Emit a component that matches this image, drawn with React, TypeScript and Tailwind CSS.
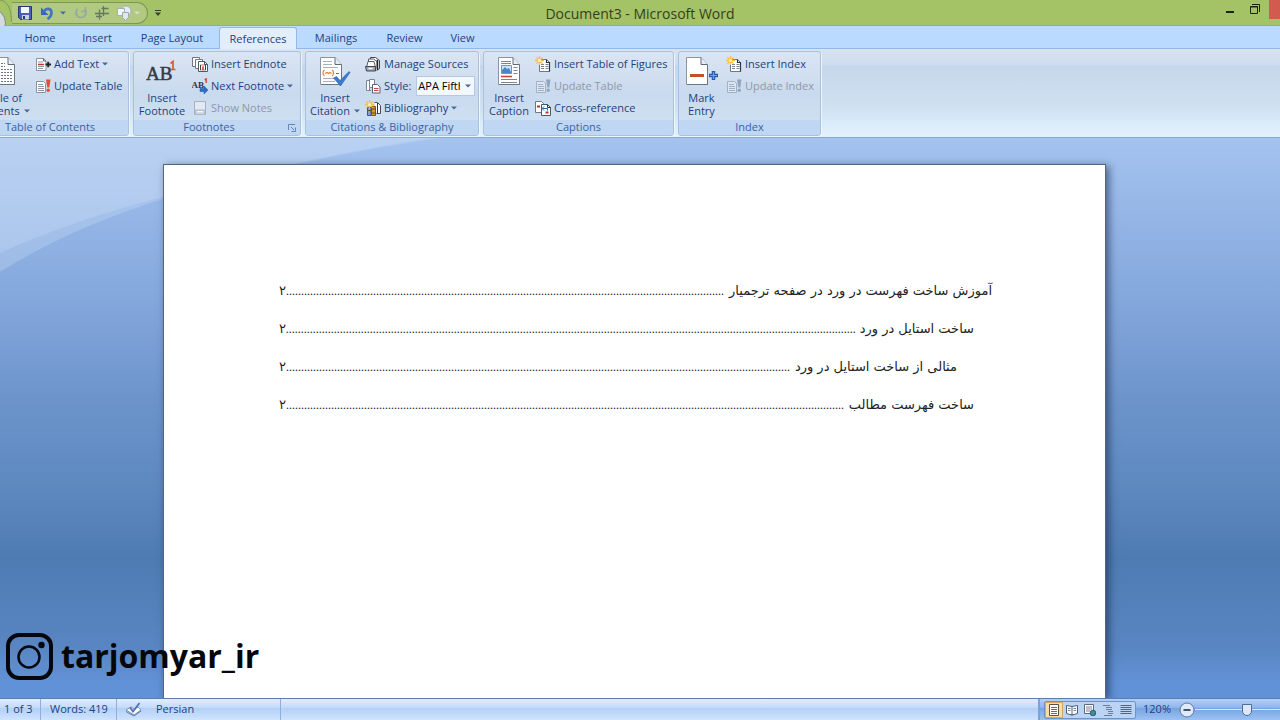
import React from "react";

/* ---------- icons ---------- */

type P = { children: React.ReactNode };

const Small = ({ children }: P) => (
  <svg className="size-4 shrink-0" viewBox="0 0 16 16" fill="none" aria-hidden="true">
    {children}
  </svg>
);

const Big = ({ children }: P) => (
  <svg className="size-8 shrink-0" viewBox="0 0 32 32" fill="none" aria-hidden="true">
    {children}
  </svg>
);

const Caret = () => (
  <svg className="h-1 w-1.5 shrink-0" viewBox="0 0 6 4" aria-hidden="true">
    <path d="M0 .5h6L3 3.5z" fill="#4c689b" />
  </svg>
);

const Star = () => (
  <>
    <path
      d="M4.500 0v9M0 4.500h9M1.400 1.400l6.200 6.200M7.600 1.400L1.400 7.600"
      stroke="#f2c040"
      strokeWidth="1.300"
    />
    <circle cx="4.500" cy="4.500" r="1.500" fill="#fff3b8" />
  </>
);

const AddTextIcon = () => (
  <Small>
    <path d="M1.500 2.500h7l2.500 2.500v9.500h-9.500z" fill="#fff" stroke="#8793a5" />
    <path d="M8.500 2.500v2.500h2.500" stroke="#5b6778" />
    <path d="M3 6h5M3 10.500h6M3 12.500h5" stroke="#8b98b0" />
    <path d="M3 8.500h6" stroke="#c33a2c" strokeWidth="1.500" />
    <path d="M10.500 8.500h5.500M13.200 5.800v5.500" stroke="#222" strokeWidth="1.900" />
  </Small>
);

const UpdateTableIcon = ({ off = false }: { off?: boolean }) => (
  <Small>
    <path d="M1.500 3.500h7l2 2v9h-9z" fill={off ? "#dfe6f0" : "#fff"} stroke={off ? "#a3afc2" : "#8793a5"} />
    <path d="M3 6.500h5M3 8.500h6M3 10.500h6M3 12.500h6" stroke={off ? "#9fb0c9" : "#8b98b0"} />
    <path d="M11 1.500h4.500l-1.200 8h-2z" fill={off ? "#93a4bf" : "#e2502b"} />
    <circle cx="13.200" cy="12.300" r="1.700" fill={off ? "#93a4bf" : "#e2502b"} />
  </Small>
);

const EndnoteIcon = () => (
  <Small>
    <path d="M.5 1.500h7v9h-7z" fill="#fff" stroke="#6e7785" />
    <path d="M3.500 3.500h7v9h-7z" fill="#fff" stroke="#6e7785" />
    <path d="M6.500 5.500h6l3 3v7h-9z" fill="#fff" stroke="#4f5865" />
    <path d="M12.500 5.500v3h3" stroke="#4f5865" />
    <path d="M9.500 9h-1v5h1M12.500 9h1v5h-1" stroke="#444" />
    <path d="M11 10.500v4M11 8.500v1" stroke="#c0312a" strokeWidth="1.500" />
  </Small>
);

const NextFootnoteIcon = () => (
  <Small>
    <text x="-.5" y="10" fontSize="9" fontWeight="700" fontFamily="Liberation Serif, serif" fill="#333">
      AB
    </text>
    <path d="M12.700 1.800l1.500-1V5" stroke="#d9452b" strokeWidth="1.400" />
    <path d="M8 10.500h4V8l4 4-4 4v-2.500H8z" fill="#2d6fc4" stroke="#1b4f98" strokeWidth=".5" />
  </Small>
);

const ShowNotesIcon = () => (
  <Small>
    <path d="M2.500 1.500h11v13h-11z" fill="#e3e9f2" stroke="#a5b0c0" />
    <path d="M3 9.500h10v5H3z" fill="#b4bfcf" />
    <path d="M4.500 11.500h7M4.500 13h7" stroke="#f3f6fa" />
  </Small>
);

const SourcesIcon = () => (
  <Small>
    <path d="M5.500 5V1.500h5l4 3v8l-3 2" fill="#fff" stroke="#3f4650" />
    <path d="M3.500 6V3h5l3.500 2.500v7" fill="#fff" stroke="#555d69" />
    <path d="M1.500 11.500L3 5.500h6l1.500 6z" fill="#fff" stroke="#555d69" />
    <path d="M.5 10.500h10v4.500H1.500z" fill="#9aa7ba" stroke="#3f4650" />
    <path d="M3.500 12.500h4" stroke="#fff" strokeWidth="1.500" />
    <path d="M12.500 4v10" stroke="#222" strokeWidth="1.500" />
  </Small>
);

const StyleIcon = () => (
  <Small>
    <path d="M1.500 2.500h3v10h-3z" fill="#fff" stroke="#7d8693" />
    <path d="M4.500 1.500h5v8h-5z" fill="#fff" stroke="#7d8693" />
    <path d="M3 12.500h3" stroke="#7d8693" />
    <path d="M7.500 6.500h5l2.500 2.500v6H7.500z" fill="#fff" stroke="#59626f" />
    <path d="M9 10.500h4.500M9 12.500h4.500" stroke="#c24a3f" />
  </Small>
);

const BibliographyIcon = () => (
  <Small>
    <path d="M9.500 2.500h3l3 3v8h-4" fill="#fff" stroke="#444b56" />
    <path d="M2.500 7.500h3.500v8H2.500z" fill="#8c9fd0" stroke="#3e5590" />
    <path d="M6.500 6.500h4v9h-4z" fill="#d59a32" stroke="#7e5514" />
    <path d="M2.500 10.500h3.500M6.500 9h4M6.500 13h4" stroke="#5b4a30" />
    <path d="M12.500 3v10" stroke="#333" />
    <Star />
  </Small>
);

const StarTableIcon = () => (
  <Small>
    <path d="M4.500 3.500h7l3 3v9h-10z" fill="#fff" stroke="#6e7785" />
    <path d="M11.500 3.500v3h3v9" stroke="#30363e" strokeWidth="1.200" />
    <path d="M6 8.500h3M6 10.500h3M6 12.500h3M10.500 8.500h3M10.500 10.500h3M10.500 12.500h3" stroke="#76859c" />
    <Star />
  </Small>
);

const CrossRefIcon = () => (
  <Small>
    <path d="M.5 1.500h6l2 2v9h-8z" fill="#fff" stroke="#6e7785" />
    <path d="M6.500 4.500h6l3 3v8h-9z" fill="#fff" stroke="#4c5561" />
    <path d="M12.500 4.500v3h3" stroke="#2e343c" />
    <path d="M2 6.500h3" stroke="#c0312a" strokeWidth="2" />
    <path d="M10.500 12.500h3" stroke="#c0312a" strokeWidth="2" />
    <path d="M12.500 10.500V8.500H7.500M9 6.500l-2 2 2 2" stroke="#2f5fae" />
  </Small>
);

const BigPage = ({ x }: { x: number }) => (
  <g transform={`translate(${x} 0)`}>
    <path d="M.5 1.500h14.500l6.500 7v20H.5z" fill="#fff" stroke="#8a94a2" />
    <path d="M15 1.500v7h6.500" fill="#e6ecf4" stroke="#5e6977" />
    <path d="M21.500 9v19.500H1" stroke="#6b7684" />
  </g>
);

const TocIcon = () => (
  <Big>
    <BigPage x={7} />
    <path d="M9 7.500h10M9 10.500h10M9 13.500h17M9 16.500h17M9 19.500h17M9 22.500h17M9 25.500h17" stroke="#6c7889" strokeDasharray="2 1" />
  </Big>
);

const FootnoteIcon = () => (
  <Big>
    <text x="0" y="24" fontSize="19" fontFamily="Liberation Serif, serif" stroke="#333b47" strokeWidth=".5" fill="#333b47">
      AB
    </text>
    <path d="M24.500 7.500l2.500-2v8M24.500 13.500h5" stroke="#dc5a36" strokeWidth="1.700" />
  </Big>
);

const CitationIcon = () => (
  <Big>
    <BigPage x={1} />
    <path d="M4 5.500h9M4 8.500h9M4 11.500h15M4 22.500h11M4 25.500h12" stroke="#a8b0bb" />
    <path d="M5.500 14c-2 1-2 5 0 6M13 14c2 1 2 5 0 6M6 17.500l2-1 1.500 1 1.500-1 1.500 1" stroke="#d88245" strokeWidth="1.200" />
    <path d="M17 17.500h3" stroke="#5e6977" />
    <path d="M14.500 22l3-1.500 3.500 4L30 15.500l1 1L21.500 30z" fill="#3a7bd0" stroke="#2a5fac" strokeWidth=".6" />
  </Big>
);

const CaptionIcon = () => (
  <Big>
    <BigPage x={5} />
    <path d="M8 5.500h10M8 7.500h10M20.500 11.500h4M20.500 14.500h4M20.500 17.500h4M8 23.500h16M8 26.500h16" stroke="#7c8796" />
    <path d="M8.500 9.500h10v8h-10z" fill="#cfe4f8" stroke="#6b97c9" />
    <path d="M9 17v-3l3-3 2 2 2-1 2.500 5z" fill="#4d86c2" />
    <path d="M8 20.500h11" stroke="#c0413a" strokeWidth="1.500" />
  </Big>
);

const MarkEntryIcon = () => (
  <Big>
    <BigPage x={0} />
    <path d="M4 19.500h14" stroke="#c6501f" strokeWidth="3" />
    <path d="M27.500 15v9M23 19.500h9" stroke="#2a59a5" strokeWidth="3.500" />
    <path d="M27.500 16v7M24 19.500h7" stroke="#6fa0e6" strokeWidth="1.200" />
  </Big>
);

/* ---------- ribbon parts ---------- */

function BigButton({ icon, top, bottom, menu, width }: {
  icon: React.ReactNode; top: string; bottom: string; menu?: boolean; width: string;
}) {
  return (
    <button className={`flex shrink-0 flex-col items-center pt-[3px] leading-[13px] ${width}`}>
      {icon}
      <span className="mt-[3px]">{top}</span>
      <span className="flex items-center gap-1 whitespace-nowrap">
        {bottom}
        {menu && <Caret />}
      </span>
    </button>
  );
}

function SmallButton({ icon, label, menu, disabled }: {
  icon: React.ReactNode; label: string; menu?: boolean; disabled?: boolean;
}) {
  return (
    <button disabled={disabled} className="flex h-[22px] items-center gap-[3px] whitespace-nowrap disabled:text-[#8f98a6]">
      {icon}
      <span>{label}</span>
      {menu && <Caret />}
    </button>
  );
}

function Group({ title, width, launcher, children }: {
  title: string; width: string; launcher?: boolean; children: React.ReactNode;
}) {
  return (
    <section aria-label={title} className={`flex h-[85px] shrink-0 flex-col overflow-hidden rounded-[3px] border border-[#a9c1dd] bg-linear-to-b from-[#dbe5f3] via-[#c9daee] to-[#d2e2f4] shadow-[1px_1px_0_#eef6fd] ${width}`}>
      <div className="flex flex-1 px-1 pt-px">{children}</div>
      <div className="flex h-[15px] shrink-0 items-center bg-[#bfd7f2] text-[#3b62a2]">
        <h2 className="flex-1 text-center">{title}</h2>
        {launcher && (
          <button aria-label="Footnote settings" className="mr-1 ml-1">
            <svg className="size-2" viewBox="0 0 8 8" fill="none">
              <path d="M.5 6V.5H7M3 3l3 3M7.500 3.500v4h-4" stroke="#6583b3" />
            </svg>
          </button>
        )}
      </div>
    </section>
  );
}

const tabs = [
  { name: "Home", cls: "w-[58px]" },
  { name: "Insert", cls: "w-[56px]" },
  { name: "Page Layout", cls: "w-[94px]" },
  { name: "References", cls: "w-[78px]" },
  { name: "Mailings", cls: "w-[78px]" },
  { name: "Review", cls: "w-[59px]" },
  { name: "View", cls: "w-[57px]" },
];

const entries = [
  { text: "آموزش ساخت فهرست در ورد در صفحه ترجمیار", pad: "pr-0", dots: 146 },
  { text: "ساخت استایل در ورد", pad: "pr-[18px]", dots: 190 },
  { text: "مثالی از ساخت استایل در ورد", pad: "pr-[35px]", dots: 168 },
  { text: "ساخت فهرست مطالب", pad: "pr-[18px]", dots: 186 },
];

function TitleBar() {
  return (
    <header className="grid h-[26px] shrink-0 grid-cols-[1fr_auto_1fr] items-center border-b border-[#8fb573] bg-[#a4c266]">
      <div className="flex h-full items-center">
        <svg className="h-[26px] w-3 shrink-0" viewBox="0 0 12 26" fill="none" aria-hidden="true">
          <path d="M0 0c7 1 11.500 8 11.500 22" stroke="#81994f" />
          <circle cx="-9" cy="23" r="14.500" fill="#d3dae2" stroke="#7e8c85" />
        </svg>
        <div className="flex h-[22px] w-[136px] items-center gap-2 rounded-r-full border border-l-0 border-[#7f9752] bg-[#b1c981] pl-1.5">
          <button aria-label="Save">
            <svg className="size-3.5" viewBox="0 0 14 14">
              <path d="M.5.500h13v13h-11l-2-2z" fill="#4a5fb0" stroke="#27357e" />
              <path d="M3 1h8v6H3z" fill="#f3f6fc" />
              <path d="M4 9h7v4.500H4z" fill="#c6d0e8" />
              <path d="M5 10h2v3H5z" fill="#27357e" />
            </svg>
          </button>
          <button aria-label="Undo" className="flex items-center gap-1.5">
            <svg className="size-3.5" viewBox="0 0 14 14" fill="none">
              <path d="M1 1.500v7.500h7.500z" fill="#3a66b5" />
              <path d="M3.500 6C6 1.500 11.500 2 11.500 6.500c0 3-1.500 5-4 6.500" stroke="#4273c2" strokeWidth="2.600" />
            </svg>
            <Caret />
          </button>
          <button aria-label="Repeat">
            <svg className="size-3.5" viewBox="0 0 14 14" fill="none">
              <path d="M3.500 3a5 5 0 1 0 7 0" stroke="#97aba0" strokeWidth="2" />
              <path d="M7 5.500h4.500V1" stroke="#97aba0" strokeWidth="1.500" />
            </svg>
          </button>
          <button aria-label="Merge lines" className="-ml-0.5">
            <svg className="size-4" viewBox="0 0 16 16" fill="none">
              <path d="M1 8.500h14M7.500 3.500h7M5.500 4.500v10M9.500 1v10M2 11.500h6" stroke="#66775f" strokeWidth="1.300" />
            </svg>
          </button>
          <button aria-label="Shapes" className="-ml-0.5 flex items-center gap-0.5">
            <svg className="size-4" viewBox="0 0 16 16" fill="none">
              <circle cx="10" cy="6" r="5" fill="#e6edf2" stroke="#a3b1b4" />
              <path d="M1.500 3.500h7v7h-7z" fill="#f3f6f8" stroke="#a3b1b4" />
              <path d="M6.500 7.500h6v5l-3 3-3-3z" fill="#dfe7f0" stroke="#9cabb4" />
            </svg>
            <svg className="h-1 w-1.5" viewBox="0 0 6 4"><path d="M0 .5h6L3 3.500z" fill="#d5dfc6" /></svg>
          </button>
        </div>
        <button aria-label="Customize toolbar" className="ml-1.5">
          <svg className="size-2" viewBox="0 0 8 8">
            <path d="M1 1h6v1H1zM1 3.500h6L4 7z" fill="#33402a" />
          </svg>
        </button>
      </div>
      <h1 className="text-[14px] text-[#353f20]">Document3 - Microsoft Word</h1>
      <div className="flex h-full items-start justify-end">
        <button aria-label="Minimize" className="mt-[11px] mr-4">
          <svg className="h-[2px] w-2" viewBox="0 0 8 2"><path d="M0 0h8v2H0z" fill="#1d2410" /></svg>
        </button>
        <button aria-label="Restore" className="mt-1 mr-[9px]">
          <svg className="size-2.5" viewBox="0 0 10 10" fill="none">
            <path d="M.5 2.500h7v7h-7zM0 3h8M2 .5h7.500V8" stroke="#1d2410" />
          </svg>
        </button>
        <button aria-label="Close" className="h-[19px] w-[11px] bg-[#d25a4e]" />
      </div>
    </header>
  );
}

function Ribbon() {
  return (
    <div className="flex h-[89px] shrink-0 overflow-hidden border-b border-[#8ba9c9] bg-[linear-gradient(#d9e3f2_0%,#cddcee_18%,#c6d7eb_19%,#cfe0f1_65%,#e1f2fe_98%)] pt-0.5">
      <div className="-ml-[29px] flex gap-1">
        <Group title="Table of Contents" width="w-[158px]">
          <BigButton icon={<TocIcon />} top="Table of" bottom="Contents" menu width="w-[51px]" />
          <div className="ml-2">
            <SmallButton icon={<AddTextIcon />} label="Add Text" menu />
            <SmallButton icon={<UpdateTableIcon />} label="Update Table" />
          </div>
        </Group>
        <Group title="Footnotes" width="w-[168px]" launcher>
          <BigButton icon={<FootnoteIcon />} top="Insert" bottom="Footnote" width="w-[48px]" />
          <div className="ml-1.5">
            <SmallButton icon={<EndnoteIcon />} label="Insert Endnote" />
            <SmallButton icon={<NextFootnoteIcon />} label="Next Footnote" menu />
            <SmallButton icon={<ShowNotesIcon />} label="Show Notes" disabled />
          </div>
        </Group>
        <Group title="Citations & Bibliography" width="w-[174px]">
          <BigButton icon={<CitationIcon />} top="Insert" bottom="Citation" menu width="w-[50px]" />
          <div className="ml-[5px]">
            <SmallButton icon={<SourcesIcon />} label="Manage Sources" />
            <div className="flex h-[22px] items-center gap-[3px]">
              <StyleIcon />
              <label htmlFor="style">Style:</label>
              <span className="relative ml-0.5 flex items-center">
                <select id="style" className="h-5 w-[59px] appearance-none border border-[#b4c8e2] bg-[#f3f8fe] pr-3.5 pl-px text-black">
                  <option>APA Fifth</option>
                </select>
                <span className="pointer-events-none absolute right-1 flex"><Caret /></span>
              </span>
            </div>
            <SmallButton icon={<BibliographyIcon />} label="Bibliography" menu />
          </div>
        </Group>
        <Group title="Captions" width="w-[191px]">
          <BigButton icon={<CaptionIcon />} top="Insert" bottom="Caption" width="w-[42px]" />
          <div className="ml-[5px]">
            <SmallButton icon={<StarTableIcon />} label="Insert Table of Figures" />
            <SmallButton icon={<UpdateTableIcon off />} label="Update Table" disabled />
            <SmallButton icon={<CrossRefIcon />} label="Cross-reference" />
          </div>
        </Group>
        <Group title="Index" width="w-[143px]">
          <BigButton icon={<MarkEntryIcon />} top="Mark" bottom="Entry" width="w-[37px]" />
          <div className="ml-1.5">
            <SmallButton icon={<StarTableIcon />} label="Insert Index" />
            <SmallButton icon={<UpdateTableIcon off />} label="Update Index" disabled />
          </div>
        </Group>
      </div>
    </div>
  );
}

function StatusBar() {
  return (
    <footer className="flex h-[22px] shrink-0 items-stretch border-t border-[#5c7eae] bg-[linear-gradient(#e0edff,#c4dbfa_40%,#b3d0f7_45%,#cfe4fd)]">
      <div className="flex w-[41px] items-center border-r border-[#8fb0dc] pl-1">1 of 3</div>
      <div className="flex w-[76px] items-center border-r border-[#8fb0dc] pl-[9px]">Words: 419</div>
      <div className="flex w-[164px] items-center gap-3.5 border-r border-[#8fb0dc] pl-2">
        <svg className="h-4 w-[17px]" viewBox="0 0 17 16" fill="none" aria-hidden="true">
          <path d="M1 8l5-3 3 2 4-2 3 3-7 5z" fill="#f6f9fd" stroke="#7c8fb5" />
          <path d="M1 9.500l8 4.500 7-5" stroke="#6379a5" />
          <path d="M5 5.500l3 4L14.500 1" stroke="#4d72b5" strokeWidth="1.800" />
        </svg>
        <span>Persian</span>
      </div>
      <div className="flex-1" />
      <div className="flex w-[242px] items-center border-l-2 border-[#7ea2d6] bg-[linear-gradient(#b3d0f8,#8fb6ec_40%,#78a4e2_45%,#9cc2f3)] pl-1">
        <div className="flex h-[18px] items-center rounded-[2px] border border-[#6e93c9] bg-[#bcd4f3]">
          <button aria-label="Print layout" className="flex h-4 w-[18px] items-center justify-center border border-[#d9a95b] bg-[#f8dca0]">
            <svg className="size-3" viewBox="0 0 12 12" fill="none">
              <path d="M1.500.500h9v11h-9z" fill="#fff" stroke="#5e513a" />
              <path d="M3 3.500h6M3 5.500h6M3 7.500h6M3 9.500h6" stroke="#776a52" />
            </svg>
          </button>
          <button aria-label="Reading" className="flex h-4 w-[18px] items-center justify-center">
            <svg className="size-3" viewBox="0 0 12 12" fill="none">
              <path d="M.5 1.500L6 2.500l5.500-1v8L6 11 .5 9.500zM6 2.500V12" fill="#fff" stroke="#4f5e77" />
              <path d="M2 4.500h2.500M2 6.500h2.500M7.500 4.500H10M7.500 6.500H10" stroke="#77859b" />
            </svg>
          </button>
          <button aria-label="Web layout" className="flex h-4 w-[18px] items-center justify-center">
            <svg className="size-3" viewBox="0 0 12 12" fill="none">
              <path d="M.5.500h9v9h-9z" fill="#fff" stroke="#5a6880" />
              <path d="M2 3h6M2 5h6M2 7h4" stroke="#77859b" />
              <circle cx="9" cy="9" r="2.800" fill="#3d8f8a" stroke="#2b5c8c" />
            </svg>
          </button>
          <button aria-label="Outline" className="flex h-4 w-[18px] items-center justify-center">
            <svg className="size-3" viewBox="0 0 12 12" fill="none">
              <path d="M1 1.500h7M4 3.500h6M4 5.500h6M6 7.500h5M6 9.500h5M2 11.500h8" stroke="#6c7c96" />
            </svg>
          </button>
          <button aria-label="Draft" className="flex h-4 w-[18px] items-center justify-center">
            <svg className="size-3" viewBox="0 0 12 12" fill="none">
              <path d="M.5 1.500h11M.5 3.500h11M.5 5.500h11M.5 7.500h11M.5 9.500h11" stroke="#55647e" />
            </svg>
          </button>
        </div>
        <button className="ml-[7px] w-7">120%</button>
        <button aria-label="Zoom out" className="ml-2">
          <svg className="size-4" viewBox="0 0 16 16">
            <circle cx="8" cy="8" r="7" fill="#dfe9f7" stroke="#5d779f" />
            <path d="M4.500 7h7v2h-7z" fill="#44546e" />
          </svg>
        </button>
        <input
          type="range"
          aria-label="Zoom"
          defaultValue={62}
          className="h-4 w-0 min-w-0 flex-1 appearance-none bg-[linear-gradient(#d3e4fb,#d3e4fb)] bg-size-[100%_1px] bg-center bg-no-repeat [&::-webkit-slider-thumb]:h-3 [&::-webkit-slider-thumb]:w-2.5 [&::-webkit-slider-thumb]:appearance-none [&::-webkit-slider-thumb]:rounded-b-[5px] [&::-webkit-slider-thumb]:border [&::-webkit-slider-thumb]:border-[#4f6b98] [&::-webkit-slider-thumb]:bg-[#dce8f8]"
        />
      </div>
    </footer>
  );
}

export default function App() {
  return (
    <div className="flex h-screen flex-col overflow-hidden font-['Open_Sans','Noto_Sans',sans-serif] text-[11px] text-[#1c427f]">
      <TitleBar />
      <nav className="flex h-[23px] shrink-0 items-end border-b border-[#93b8e6] bg-[#bbdaff] pl-[11px]">
        {tabs.map((t) => (
          <button
            key={t.name}
            className={`h-[22px] pt-0.5 ${t.cls} ${t.name === "References" ? "-mb-px rounded-t-[3px] border border-b-0 border-[#93b8e6] bg-[#e3eefc]" : ""}`}
          >
            {t.name}
          </button>
        ))}
      </nav>
      <Ribbon />

      <main className="relative flex min-h-0 flex-1 justify-center overflow-hidden bg-[linear-gradient(#a4c3ef_0%,#80a4da_32%,#6c94cb_47%,#5d89bf_62%,#4e7bb2_75%,#5986c2_91%,#6191d6_97%)] pt-[26px] pr-[11px]">
        <svg className="absolute top-0 left-0 h-[140px] w-[450px]" viewBox="0 0 450 140" aria-hidden="true">
          <path d="M0 0H440Q370 10 302 25Q225 40 163 61Q70 90 0 134z" fill="#cfe3f8" fillOpacity=".28" />
          <path d="M0 0H430Q300 20 163 59Q70 83 0 115z" fill="#dbe9fa" fillOpacity=".22" />
        </svg>
        <article className="relative w-full max-w-[943px] border border-b-0 border-[#56657c] bg-white pt-[107px] pr-[113px] pl-[115px] shadow-[3px_2px_8px_rgba(20,35,70,0.6)]">
          <ol dir="rtl" className="font-['DejaVu_Sans',sans-serif] text-[13px] leading-[38px] text-[#222]">
            {entries.map((e) => (
              <li key={e.text} className={`flex h-[38px] ${e.pad}`}>
                <span className="shrink-0 whitespace-nowrap">{e.text}</span>
                <span className="mr-1 min-w-0 flex-1 overflow-hidden text-left whitespace-nowrap font-['Liberation_Serif',serif] text-[12px]">
                  {".".repeat(e.dots)}
                </span>
                <span className="shrink-0">۲</span>
              </li>
            ))}
          </ol>
        </article>
        <a href="#tarjomyar_ir" className="absolute bottom-3.5 left-1.5 flex items-center gap-2 text-[32px] leading-[56px] font-bold text-[#05070d]">
          <svg className="size-[47px]" viewBox="0 0 47 47" fill="none" aria-hidden="true">
            <rect x="2" y="2" width="43" height="43" rx="11" stroke="currentColor" strokeWidth="4" />
            <circle cx="23" cy="24" r="10.500" stroke="currentColor" strokeWidth="2.500" />
            <circle cx="35.500" cy="12" r="3.200" fill="currentColor" />
          </svg>
          tarjomyar_ir
        </a>
      </main>
      <StatusBar />
    </div>
  );
}
